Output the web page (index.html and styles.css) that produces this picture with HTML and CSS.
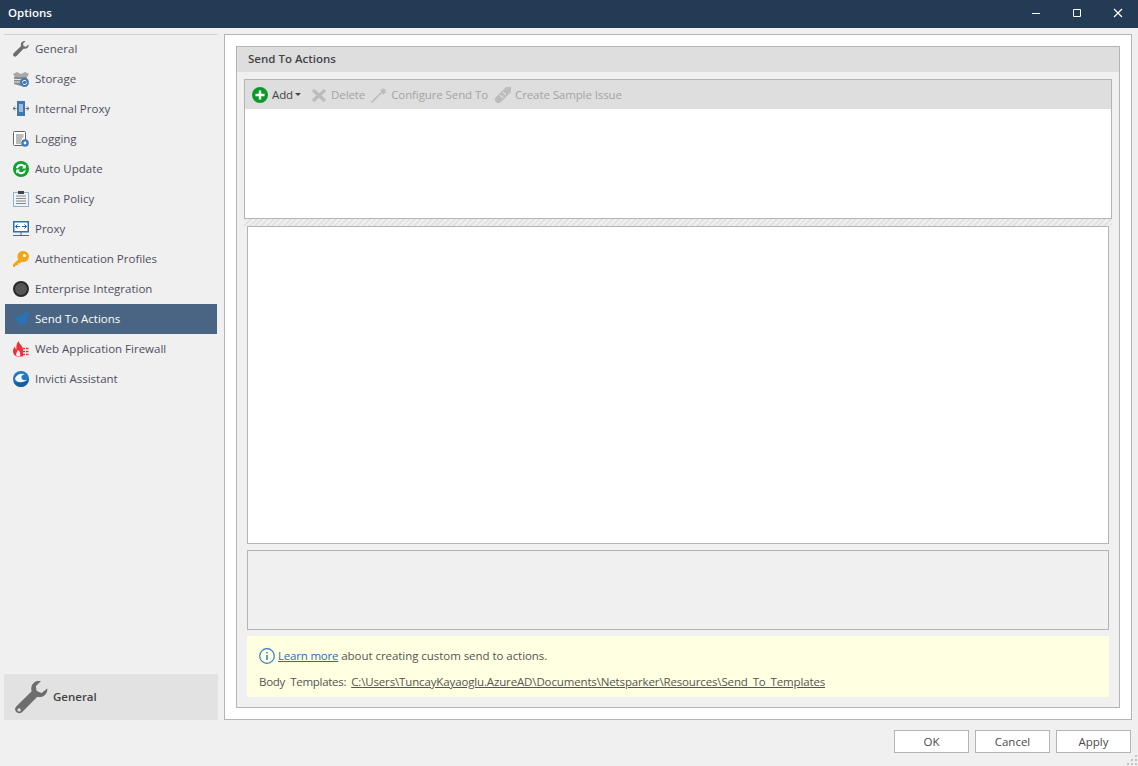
FILE: index.html
```html
<!DOCTYPE html>
<html lang="en">
<head>
    <meta name="viewport" content="width=device-width, initial-scale=1.0">
    <title>Options</title>
    <link rel="stylesheet" href="styles.css">
</head>
<body>
    <!-- Window title bar -->
    <header class="titlebar">
        <span class="title">Options</span>
        <div class="window-buttons">
            <svg width="10" height="10" viewBox="0 0 10 10"><path d="M1 5.500h8" stroke="#fff" fill="none"/></svg>
            <svg width="10" height="10" viewBox="0 0 10 10"><path d="M1.500 1.500h7v7h-7z" stroke="#fff" fill="none"/></svg>
            <svg width="10" height="10" viewBox="0 0 10 10"><path d="M1 1l8 8M9 1l-8 8" stroke="#fff" stroke-width="1.200" fill="none"/></svg>
        </div>
    </header>

    <div class="main">
        <!-- Left navigation -->
        <aside class="sidebar">
            <ul class="nav">
                <li class="nav-item">
                    <svg class="icon" viewBox="0 0 16 16"><path d="M15.600 3.600l-2.700 2.200-2.400-.9-.4-2.300L12.600 0C10.500-.5 8.200.9 7.900 3.100c-.1.700 0 1.300.2 1.900L.7 12.200c-.9.900-.9 2 0 2.800.8.900 1.900.9 2.800 0l7.300-7.400c2.600.9 5.300-1.300 4.800-4z" fill="#6d6d6d"/></svg>
                    General
                </li>
                <li class="nav-item">
                    <svg class="icon" viewBox="0 0 16 16"><path d="M0 3l4-2 4 2 4-2 4 2-2 3H2z" fill="#a8a8a8"/><path d="M1 6h13v5H8v4l-7-2z" fill="#8a8a8a"/><path d="M1 8.500h8M1 11h7" stroke="#e6e6e6" fill="none"/><circle cx="11.500" cy="11.500" r="4.500" fill="#3d78b8"/><path d="M9.300 11.500a2.200 2.200 0 0 1 4-1.200M13.700 11.500a2.200 2.200 0 0 1-4 1.200" stroke="#fff" fill="none"/></svg>
                    Storage
                </li>
                <li class="nav-item">
                    <svg class="icon" viewBox="0 0 16 16"><rect x="4" y="0" width="8" height="15" fill="#3d78b4"/><path d="M6 4h4M6 6h4M6 8h4M6 10h4" stroke="#fff" fill="none"/><path d="M0 7.500h3.500M12.500 7.500H16M2 5.500l-2 2 2 2M14 5.500l2 2-2 2" stroke="#666" fill="none"/></svg>
                    Internal Proxy
                </li>
                <li class="nav-item">
                    <svg class="icon" viewBox="0 0 16 16"><path d="M.5 1.500a1 1 0 0 1 1-1h10a1 1 0 0 1 1 1v13h-11a1 1 0 0 1-1-1z" fill="#fff" stroke="#666"/><path d="M3 4h7.500M3 6h7.500M3 8h6M3 10h5M3 12h5" stroke="#777" fill="none"/><circle cx="12" cy="12" r="2.600" fill="#fff" stroke="#3d78b8" stroke-width="2.400"/></svg>
                    Logging
                </li>
                <li class="nav-item">
                    <svg class="icon" viewBox="0 0 16 16"><circle cx="8" cy="8" r="8" fill="#0ea12f"/><path d="M3 7a5 5 0 0 1 8.700-2.600l1.100-1v4H8.800l1.500-1.500A3.200 3.200 0 0 0 5 7.500zM13 9a5 5 0 0 1-8.700 2.600l-1.100 1v-4h4l-1.500 1.500a3.200 3.200 0 0 0 5.300-.6z" fill="#fff"/></svg>
                    Auto Update
                </li>
                <li class="nav-item">
                    <svg class="icon" viewBox="0 0 16 16"><rect x=".5" y="1.500" width="15" height="14" fill="#eef3f8" stroke="#8fb2d4"/><rect x="5" y="0" width="6" height="3" fill="#444"/><path d="M3 5h10M3 7.500h10M3 10h10M3 12.500h10" stroke="#888" fill="none"/></svg>
                    Scan Policy
                </li>
                <li class="nav-item">
                    <svg class="icon" viewBox="0 0 16 16"><rect x=".75" y=".75" width="14.500" height="10" fill="#fff" stroke="#2f6fb0" stroke-width="1.500"/><path d="M2.500 5.500h4.500M9 5.500h4.500M4.500 3.500l-2 2 2 2M11.500 3.500l2 2-2 2" stroke="#1f5f9f" fill="none"/><path d="M8 11v3M0 14.500h16" stroke="#2f6fb0" fill="none"/></svg>
                    Proxy
                </li>
                <li class="nav-item">
                    <svg class="icon" viewBox="0 0 16 16"><path d="M10.500 0a5.500 5.500 0 1 1-1.900 10.700L7 12.300H5v2H3L1.500 16H0v-2.500l5.300-5.100A5.500 5.500 0 0 1 10.500 0z" fill="#f2a516"/><circle cx="11.500" cy="4.500" r="1.500" fill="#fff"/></svg>
                    Authentication Profiles
                </li>
                <li class="nav-item">
                    <svg class="icon" viewBox="0 0 16 16"><circle cx="8" cy="8" r="7" fill="#555" stroke="#2a2a2a" stroke-width="2"/></svg>
                    Enterprise Integration
                </li>
                <li class="nav-item selected">
                    <svg class="icon" viewBox="0 0 16 16"><path d="M16 0L0 8l5 2.500L7 15l2.500-2.500 3 1.500z" fill="#2872b5"/></svg>
                    Send To Actions
                </li>
                <li class="nav-item">
                    <svg class="icon" viewBox="0 0 16 16"><path d="M5.500 0c.5 3 4 4.500 4.500 8v7.500H5C2 15.500 0 13 0 10c0-2 1-3.500 2-4.500 0 1.500.5 2.500 1.500 3C3 5 3.500 2.500 5.500 0z" fill="#e8333f"/><path d="M5 9c1 1 3 2 2 6H3.500C2.500 12.500 4 11 5 9z" fill="#f8f0f0"/><path d="M9.500 7.500h6.500M9.500 10.500h6.500M9.500 13.500h6.500" stroke="#e8333f" stroke-width="1.600" stroke-dasharray="2.500 1" fill="none"/></svg>
                    Web Application Firewall
                </li>
                <li class="nav-item">
                    <svg class="icon" viewBox="0 0 16 16"><circle cx="8" cy="8" r="8" fill="#1f78c0"/><path d="M.5 10.500c3 2 8 2 15.300-3 .3 4.500-3.300 8.500-7.800 8.500-3.400 0-6.300-2.200-7.500-5.500z" fill="#155f9f"/><path d="M2 8C3 3.500 8 1.500 12 3.500c-2.500 0-4 1.500-3.500 3.500s3 3 6 1.500C11 12 4 12.500 2 8z" fill="#f2f8fc"/></svg>
                    Invicti Assistant
                </li>
            </ul>
            <div class="section-button">
                <svg class="section-icon" viewBox="0 0 16 16"><path d="M15.600 3.600l-2.700 2.200-2.400-.9-.4-2.300L12.600 0C10.500-.5 8.200.9 7.900 3.100c-.1.700 0 1.300.2 1.900L.7 12.200c-.9.900-.9 2 0 2.800.8.900 1.900.9 2.800 0l7.300-7.400c2.600.9 5.300-1.300 4.800-4z" fill="#6d6d6d"/><circle cx="2" cy="14" r=".8" fill="#e2e2e2"/></svg>
                General
            </div>
        </aside>

        <!-- Options page -->
        <section class="outer-panel">
            <div class="inner-panel">
                <h2 class="panel-header">Send To Actions</h2>
                <div class="panel-body">
                    <div class="action-list">
                        <div class="toolbar">
                            <span class="tool enabled">
                                <svg class="icon" viewBox="0 0 16 16"><circle cx="8" cy="8" r="8" fill="#0a9a2c"/><path d="M8 3.500v9M3.500 8h9" stroke="#fff" stroke-width="2.400" fill="none"/></svg>
                                Add<i class="caret"></i>
                            </span>
                            <span class="tool tool-delete">
                                <svg class="icon" viewBox="0 0 16 16"><path d="M2 3l12 11M14 3L2 14" stroke="#bcbcbc" stroke-width="3.400" fill="none"/></svg>
                                Delete
                            </span>
                            <span class="tool">
                                <svg class="icon" viewBox="0 0 16 16"><path d="M.5 15.500L10 6" stroke="#bcbcbc" stroke-width="1.600" fill="none"/><path d="M12 0l.7 2.300L15 2l-1 2.200 2 1.500-2.500.3-.5 2.500-1.500-2-2.500.5 1.300-2.200L9 2.500l2.300.3z" fill="#bcbcbc"/></svg>
                                Configure Send To
                            </span>
                            <span class="tool tool-sample">
                                <svg class="icon" viewBox="0 0 16 16"><path d="M3.500 12.500l9-9" stroke="#bcbcbc" stroke-width="7" stroke-linecap="round" fill="none"/><path d="M5 8l3 3M8 5l3 3" stroke="#dedede" stroke-width="1.200" fill="none"/><path d="M13 0h3v3z" fill="#bcbcbc"/></svg>
                                Create Sample Issue
                            </span>
                        </div>
                    </div>
                    <div class="splitter"></div>
                    <div class="edit-area"></div>
                    <div class="log-area"></div>
                    <div class="info-box">
                        <p class="info-line">
                            <svg class="info-icon" viewBox="0 0 16 16"><circle cx="8" cy="8" r="7.300" fill="none" stroke="#2f7ec2" stroke-width="1.200"/><path d="M8 7v5M8 4v1.600" stroke="#2f7ec2" stroke-width="1.500" fill="none"/></svg>
                            <span class="info-text"><a class="link-blue">Learn more</a> about creating custom send to actions.</span>
                        </p>
                        <p class="path-line">
                            <span class="path-label">Body&nbsp; Templates:</span>
                            <a class="link-path">C:\Users\TuncayKayaoglu.AzureAD\Documents\Netsparker\Resources\Send_To_Templates</a>
                        </p>
                    </div>
                </div>
            </div>
        </section>
    </div>

    <footer class="footer">
        <button class="btn">OK</button>
        <button class="btn">Cancel</button>
        <button class="btn">Apply</button>
        <svg class="grip" width="12" height="12" viewBox="0 0 12 12"><path d="M9 1h2v2H9zM5 5h2v2H5zM9 5h2v2H9zM1 9h2v2H1zM5 9h2v2H5zM9 9h2v2H9z" fill="#c4c4c4"/></svg>
    </footer>
</body>
</html>
```

FILE: styles.css
```css
* {
    box-sizing: border-box;
}
body {
    font-family: "Open Sans", "Noto Sans", Arial, sans-serif;
    font-size: 11.5px;
    margin: 0;
    width: 1138px;
    height: 766px;
    overflow: hidden;
    display: flex;
    flex-direction: column;
    background-color: #f0f0f0;
    color: #4a4a4a;
}
.titlebar {
    height: 28px;
    flex: none;
    display: flex;
    align-items: center;
    justify-content: space-between;
    background-color: #243b55;
    color: #fff;
    padding: 0 15px 2px 8px;
}
.title {
    font-weight: 600;
    font-size: 11.5px;
    margin-top: -2px;
}
.window-buttons {
    display: flex;
    gap: 31px;
}
.main {
    height: 692px;
    flex: none;
    display: flex;
    gap: 6px;
    padding: 6px 6px 0 4px;
}
.sidebar {
    width: 214px;
    flex: none;
    display: flex;
    flex-direction: column;
    justify-content: space-between;
    box-shadow: inset 0 1px #d2d2d2;
}
.nav {
    list-style: none;
    margin: 0;
    padding: 0 1px;
}
.nav-item {
    height: 30px;
    display: flex;
    align-items: center;
    gap: 6px;
    padding: 0 0 2px 8px;
    color: #4f4f5f;
}
.nav-item .icon {
    margin-top: 2px;
}
.nav-item.selected {
    background-color: #4a6583;
    color: #fff;
}
.icon {
    width: 16px;
    height: 16px;
    flex: none;
}
.section-button {
    height: 46px;
    display: flex;
    align-items: center;
    gap: 5px;
    padding: 0 0 2px 11px;
    background-color: #e2e2e2;
    font-weight: 600;
    color: #444;
}
.section-icon {
    width: 33px;
    height: 33px;
    margin-top: 2px;
}
.outer-panel {
    flex: 1;
    background-color: #fff;
    border: 1px solid #b4b4b4;
    padding: 11px;
}
.inner-panel {
    height: 100%;
    display: flex;
    flex-direction: column;
    background-color: #f0f0f0;
    border: 1px solid #b4b4b4;
}
.panel-header {
    height: 25px;
    flex: none;
    margin: 0;
    padding: 0 11px 2px;
    display: flex;
    align-items: center;
    background-color: #dedede;
    font-size: 11.5px;
    font-weight: 600;
    color: #444;
}
.panel-body {
    flex: 1;
    display: flex;
    flex-direction: column;
    padding: 7px 7px 10px 7px;
}
.action-list {
    height: 140px;
    flex: none;
    background-color: #fff;
    border: 1px solid #b4b4b4;
}
.toolbar {
    height: 29px;
    display: flex;
    align-items: center;
    gap: 6px;
    padding-left: 7px;
    background-color: #dedede;
    color: #a4a4a4;
    letter-spacing: -0.1px;
}
.tool {
    display: flex;
    align-items: center;
    gap: 4px;
}
.tool.enabled {
    color: #444;
}
.tool-delete {
    margin-left: 4px;
}
.tool-sample {
    margin-left: 1px;
}
.caret {
    display: block;
    margin-left: -2px;
    border-top: 3px solid #444;
    border-left: 3px solid transparent;
    border-right: 3px solid transparent;
}
.splitter {
    height: 7px;
    flex: none;
    background: repeating-linear-gradient(135deg, #e2e2e2 0 2px, #f0f0f0 2px 4px);
}
.edit-area {
    height: 318px;
    flex: none;
    margin: 0 3px 6px;
    background-color: #fff;
    border: 1px solid #b4b4b4;
}
.log-area {
    height: 80px;
    flex: none;
    margin: 0 3px 6px;
    border: 1px solid #b4b4b4;
}
.info-box {
    height: 61px;
    flex: none;
    margin: 0 3px;
    padding: 11px 12px 0;
    background-color: #ffffe1;
}
.info-box p {
    margin: 0;
    display: flex;
    align-items: center;
    white-space: pre;
    color: #555;
}
.info-line {
    height: 17px;
}
.info-text {
    letter-spacing: -0.05px;
}
.path-line {
    height: 17px;
    margin-top: 9px !important;
}
.info-icon {
    width: 16px;
    height: 16px;
    margin-right: 3px;
}
.link-blue {
    color: #1f6fb0;
    text-decoration: underline;
    letter-spacing: -0.2px;
}
.link-path {
    color: #555;
    text-decoration: underline;
    letter-spacing: -0.14px;
}
.path-label {
    margin-right: 5px;
    letter-spacing: -0.3px;
}
.footer {
    flex: 1;
    position: relative;
    display: flex;
    justify-content: flex-end;
    align-items: flex-start;
    gap: 6px;
    padding: 10px 7px 0 0;
}
.btn {
    width: 75px;
    height: 23px;
    padding: 0;
    background-color: #fff;
    border: 1px solid #b4b4b4;
    font-family: inherit;
    font-size: 11.5px;
    color: #4a4a4a;
}
.grip {
    position: absolute;
    right: 0;
    bottom: 0;
}
```
